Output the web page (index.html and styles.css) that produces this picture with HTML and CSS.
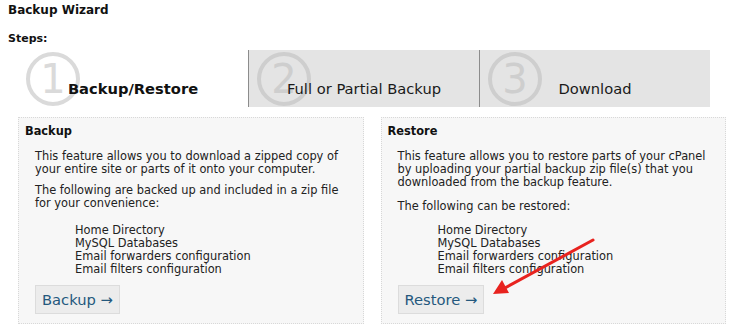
FILE: index.html
```html
<!DOCTYPE html>
<html>
<head>
<meta charset="utf-8">
<link rel="stylesheet" href="styles.css">
</head>
<body>
<div class="page">
  <h1 class="title">Backup Wizard</h1>
  <h2 class="steps">Steps:</h2>
  <div class="tabs">
    <div class="tab tab-active">
      <svg class="num" viewBox="0 0 56 56" width="56" height="56"><circle cx="28" cy="28" r="25" /><text x="28" y="42" text-anchor="middle">1</text></svg>
      <span class="tab-label">Backup/Restore</span>
    </div>
    <div class="tab">
      <svg class="num" viewBox="0 0 56 56" width="56" height="56"><circle cx="28" cy="28" r="25" /><text x="28" y="42" text-anchor="middle">2</text></svg>
      <span class="tab-label">Full or Partial Backup</span>
    </div>
    <div class="tab">
      <svg class="num" viewBox="0 0 56 56" width="56" height="56"><circle cx="28" cy="28" r="25" /><text x="28" y="42" text-anchor="middle">3</text></svg>
      <span class="tab-label">Download</span>
    </div>
  </div>
  <div class="panels">
    <div class="panel">
      <h3 class="panel-title">Backup</h3>
      <div class="desc">
        <p>This feature allows you to download a zipped copy of your entire site or parts of it onto your computer.</p>
        <p>The following are backed up and included in a zip file for your convenience:</p>
      </div>
      <ul class="items">
        <li>Home Directory</li>
        <li>MySQL Databases</li>
        <li>Email forwarders configuration</li>
        <li>Email filters configuration</li>
      </ul>
      <button class="btn">Backup →</button>
    </div>
    <div class="panel">
      <h3 class="panel-title">Restore</h3>
      <div class="desc desc-wide">
        <p>This feature allows you to restore parts of your cPanel by uploading your partial backup zip file(s) that you downloaded from the backup feature.</p>
        <p>The following can be restored:</p>
      </div>
      <ul class="items">
        <li>Home Directory</li>
        <li>MySQL Databases</li>
        <li>Email forwarders configuration</li>
        <li>Email filters configuration</li>
      </ul>
      <button class="btn">Restore →</button>
    </div>
  </div>
  <svg class="arrow" width="734" height="331" viewBox="0 0 734 331">
    <line x1="593" y1="240" x2="503" y2="289" />
    <polygon points="493,294 509,293 502,280" />
  </svg>
</div>
</body>
</html>
```

FILE: styles.css
```css
* { box-sizing: border-box; }
html, body { margin: 0; padding: 0; background: #fff; }
body {
  font-family: "DejaVu Sans", Verdana, sans-serif;
  font-size: 11.4px;
  color: #222;
}
.page {
  position: relative;
  width: 734px;
  height: 331px;
  padding: 3px 8px 0 8px;
  overflow: hidden;
}
.title {
  margin: 0;
  font-size: 12px;
  line-height: 15px;
  font-weight: bold;
  color: #111;
}
.steps {
  margin: 14px 0 0 0;
  font-size: 11px;
  line-height: 14px;
  font-weight: bold;
  color: #111;
}
.tabs {
  display: flex;
  margin: 4px 0 0 10px;
  height: 57px;
}
.tab {
  position: relative;
  width: 231px;
  height: 57px;
  background: #e4e4e4;
  border-left: 1px solid #8c8c8c;
  display: flex;
  justify-content: center;
  padding-top: 30px;
}
.tab:first-child { width: 230px; }
.tab-active {
  background: #fff;
  border-left: none;
}
.num {
  position: absolute;
  left: 7px;
  top: 1px;
}
.num circle {
  fill: none;
  stroke: #dadada;
  stroke-width: 4;
}
.num text {
  font-family: "DejaVu Sans", sans-serif;
  font-size: 40px;
  fill: #dadada;
}
.tab:not(.tab-active) .num circle { stroke: #cecece; }
.tab:not(.tab-active) .num text { fill: #cecece; }
.tab-label {
  position: relative;
  font-size: 14.7px;
  line-height: 18px;
  color: #1a1a1a;
}
.tab-active .tab-label {
  font-weight: bold;
  color: #111;
}
.panels {
  display: flex;
  gap: 17px;
  margin: 10px 0 0 10px;
}
.panel {
  width: 347px;
  height: 207px;
  background: #f7f7f7;
  border: 1px dotted #d8d8d8;
  padding: 6px 6px 0 6px;
}
.panel-title {
  margin: 0;
  font-size: 11.4px;
  line-height: 15px;
  font-weight: bold;
  color: #111;
}
.desc {
  margin: 11px 0 0 10px;
  height: 74px;
}
.desc p {
  margin: 0 0 8px 0;
  line-height: 13px;
}
.desc-wide p { margin-bottom: 11px; }
.items {
  list-style: none;
  margin: 0 0 0 50px;
  padding: 0;
  line-height: 13px;
}
.btn {
  display: block;
  margin: 9px 0 0 10px;
  height: 29px;
  padding: 0 6px;
  background: #ececec;
  border: 1px solid #dcdcdc;
  font-family: "DejaVu Sans", Verdana, sans-serif;
  font-size: 14.7px;
  color: #24587d;
}
.arrow {
  position: absolute;
  left: 0;
  top: 0;
  pointer-events: none;
}
.arrow line {
  stroke: #e8231f;
  stroke-width: 3;
  stroke-linecap: round;
}
.arrow polygon { fill: #e8231f; }
```
